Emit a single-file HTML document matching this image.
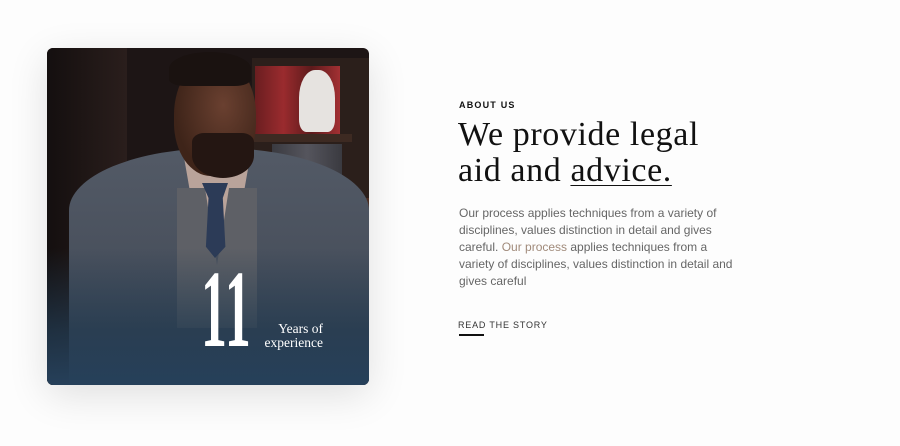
<!DOCTYPE html>
<html><head><meta charset="utf-8"><style>
body{margin:0;width:900px;height:446px;background:#fdfdfd;position:relative;overflow:hidden;font-family:"Liberation Sans",sans-serif}
.card{position:absolute;left:47px;top:48px;width:322px;height:337px;border-radius:6px;overflow:hidden;background:#1d1515;box-shadow:0 10px 40px rgba(0,0,0,.12)}
.a{position:absolute}
</style></head><body>
<div class="card">
 <div class="a" style="left:0;top:0;width:80px;height:337px;background:linear-gradient(90deg,#140f0f,#2a1e1c)"></div>
 <div class="a" style="left:205px;top:10px;width:117px;height:260px;background:#2b1f1b"></div>
 <div class="a" style="left:208px;top:18px;width:85px;height:70px;background:linear-gradient(90deg,#6a1e20,#9a2b2e,#5c1a1b,#a33033)"></div>
 <div class="a" style="left:205px;top:86px;width:100px;height:8px;background:#3d2a22"></div>
 <div class="a" style="left:225px;top:96px;width:70px;height:60px;background:linear-gradient(90deg,#3a3a40,#55555d,#3a3a40)"></div>
 <div class="a" style="left:252px;top:22px;width:36px;height:62px;background:#e6e3e0;border-radius:45% 45% 20% 20%"></div>
 <div class="a" style="left:295px;top:150px;width:27px;height:100px;background:#5a3426;opacity:.7"></div>
 <div class="a" style="left:22px;top:100px;width:300px;height:250px;background:linear-gradient(180deg,#535a66,#3d4552);border-radius:50% 50% 0 0/25% 25% 0 0"></div>
 <div class="a" style="left:135px;top:98px;width:70px;height:80px;background:#b9a39a;clip-path:polygon(0 0,100% 0,80% 100%,20% 100%)"></div>
 <div class="a" style="left:130px;top:140px;width:80px;height:140px;background:#5e6066;clip-path:polygon(0 0,35% 0,50% 55%,65% 0,100% 0,100% 100%,0 100%)"></div>
 <div class="a" style="left:155px;top:135px;width:26px;height:75px;background:#2c3b57;clip-path:polygon(0 0,100% 0,80% 20%,90% 85%,50% 100%,15% 85%,25% 20%)"></div>
 <div class="a" style="left:127px;top:10px;width:82px;height:118px;background:radial-gradient(ellipse at 60% 40%,#6a4030,#3e2419 70%);border-radius:48% 48% 45% 45%"></div>
 <div class="a" style="left:122px;top:4px;width:82px;height:34px;background:#1a1210;border-radius:50% 50% 20% 20%"></div>
 <div class="a" style="left:145px;top:85px;width:62px;height:45px;background:#241612;border-radius:20% 20% 50% 50%"></div>
 <div class="a" style="left:0;top:200px;width:322px;height:137px;background:linear-gradient(180deg,rgba(34,58,80,0),rgba(34,58,80,.75) 60%,#26405a)"></div>
 <div class="a" style="left:154px;top:206px;color:#fff;font-family:'Liberation Serif',serif;font-weight:bold;font-size:110px;line-height:110px;transform:scaleX(.47);transform-origin:left;letter-spacing:2px">11</div>
 <div class="a" style="left:210px;top:274px;color:#fff;font-family:'Liberation Serif',serif;font-size:13.5px;line-height:14px;text-align:right;width:66px">Years of<br>experience</div>
</div>
<div class="a" style="left:459px;top:100px;font-size:9px;font-weight:bold;letter-spacing:1.2px;color:#111">ABOUT US</div>
<div class="a" style="left:458px;top:117px;font-family:'Liberation Serif',serif;font-size:34px;line-height:36px;color:#111;letter-spacing:.6px">We provide legal<br>aid and <span style="text-decoration:underline;text-decoration-thickness:1px;text-underline-offset:4px">advice.</span></div>
<div class="a" style="left:459px;top:205px;width:280px;font-size:12px;line-height:17px;color:#666">Our process applies techniques from a variety of disciplines, values distinction in detail and gives careful. <span style="color:#a08a7a">Our process</span> applies techniques from a variety of disciplines, values distinction in detail and gives careful</div>
<div class="a" style="left:458px;top:320px;font-size:9px;letter-spacing:.8px;color:#333">READ THE STORY</div>
<div class="a" style="left:459px;top:334px;width:25px;height:2px;background:#111"></div>
</body></html>
